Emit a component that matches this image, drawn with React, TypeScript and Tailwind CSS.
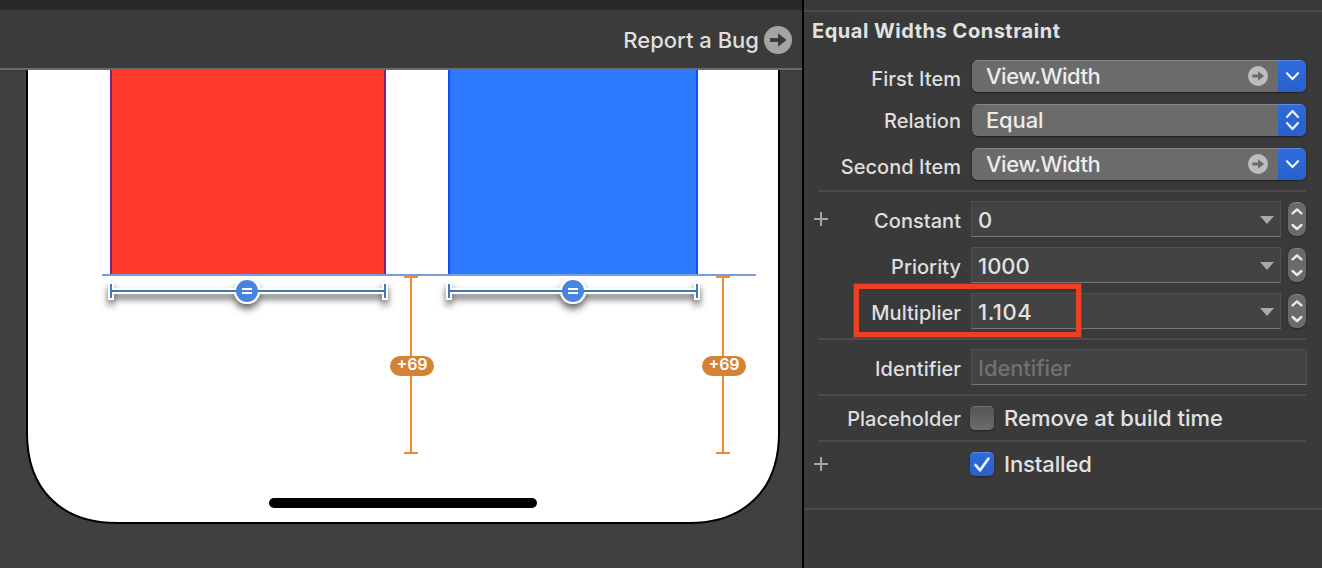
import type { ReactNode } from "react";

const FONT = "font-['Inter','Liberation_Sans',sans-serif] font-[450]";

function ArrowBadge({ size, fill, arrow }: { size: number; fill: string; arrow: string }) {
  return (
    <svg width={size} height={size} viewBox="0 0 28 28" className="shrink-0">
      <circle cx="14" cy="14" r="14" fill={fill} />
      <path d="M6 12h8V7.2L22.6 14 14 20.8V16H6z" fill={arrow} />
    </svg>
  );
}

function Chevrons({ both }: { both?: boolean }) {
  return (
    <svg width="28" height="32" viewBox="0 0 28 32" fill="none" stroke="#eef3fd" strokeWidth="2.2" strokeLinecap="round" strokeLinejoin="round" className="-mt-px">
      {both ? <path d="M9 13l5.5-6 5.5 6M9 19l5.5 6 5.5-6" /> : <path d="M9 13.2l5.5 5.8 5.5-5.8" />}
    </svg>
  );
}

function Label({ children, className = "", width = "w-[157px]" }: { children?: ReactNode; className?: string; width?: string }) {
  return (
    <div className={`${width} mr-px -ml-px shrink-0 translate-x-px text-right text-[20px] leading-6 tracking-[0.03px] whitespace-nowrap text-[#dfdfdf] ${className}`}>
      {children}
    </div>
  );
}

function Popup({ text, both }: { text: string; both?: boolean }) {
  return (
    <div className="ml-[11px] flex h-8 w-[334px] items-center overflow-hidden rounded-[6px] bg-[#6b6b6b] shadow-[0_1px_2px_rgba(0,0,0,0.45)]">
      <div className="flex h-full flex-1 items-center justify-between border-t border-[#858585] pr-2.5 pb-px pl-[14px]">
        <span className={`text-[22px] leading-7 text-[#ececec] ${both ? "tracking-[-0.15px]" : "pb-px tracking-[-0.5px]"}`}>{text}</span>
        {!both && <ArrowBadge size={20} fill="#bdbdbd" arrow="#6b6b6b" />}
      </div>
      <div className="flex h-full w-7 items-center border-t border-[#5c8ce2] bg-linear-to-b from-[#2f6bdd] to-[#2860cb]">
        <Chevrons both={both} />
      </div>
    </div>
  );
}

function Stepper() {
  return (
    <div className="ml-[7px] h-[34px] w-[18px] rounded-[8px] border-t border-[#858585] bg-[#6a6a6a] shadow-[0_1px_2px_rgba(0,0,0,0.4)]">
      <svg width="18" height="33" viewBox="0 0 18 33" fill="none" stroke="#e9e9e9" strokeWidth="2.4" strokeLinecap="round" strokeLinejoin="round">
        <path d="M4.6 10.4L9 6.4l4.4 4M4.6 22l4.4 4 4.4-4" />
      </svg>
    </div>
  );
}

const FIELD = "ml-[10px] flex h-9 items-center border border-[#505050] border-b-[#757575] bg-[#434343] pl-[6px] pr-[6px]";

function NumberRow({ label, value, spacing = "", plus }: { label: string; value: string; spacing?: string; plus?: boolean }) {
  return (
    <div className="flex h-[46px] items-center">
      {plus && <Plus />}
      <Label className="pt-[3px]" width={plus ? "w-[147px]" : "w-[157px]"}>{label}</Label>
      <div className={`${FIELD} w-[310px] justify-between`}>
        <span className={`pt-0.5 text-[22px] leading-7 text-[#e2e2e2] ${spacing}`}>{value}</span>
        <svg width="14" height="8" viewBox="0 0 14 8" className="mt-px">
          <path d="M0 0h14L7 8z" fill="#a9a9a9" />
        </svg>
      </div>
      <Stepper />
    </div>
  );
}

function Plus() {
  return (
    <svg width="14" height="14" viewBox="0 0 14 14" className="mr-[-14px] ml-[10px] shrink-0">
      <path d="M7 0v14M0 7h14" stroke="#a6a6a6" strokeWidth="2" />
    </svg>
  );
}

function Divider() {
  return <div className="mr-4 ml-[14px] h-0.5 shrink-0 bg-[#4c4c4c]" />;
}

function WidthConstraint({ x1, x2, cx }: { x1: number; x2: number; cx: number }) {
  const line = `M${x1} 214v14M${x2} 214v14M${x1} 221H${x2}`;
  const halo = `M${x1} 212v18M${x2} 212v18M${x1} 221H${x2}`;
  return (
    <g filter="url(#drop)">
      <path d={halo} stroke="#fff" strokeWidth="6" />
      <circle cx={cx} cy="221" r="13" fill="#fff" />
      <path d={line} stroke="#3f78b8" strokeWidth="2" />
      <circle cx={cx} cy="221" r="11" fill="#4786dc" />
      <path d={`M${cx - 5} 219h10M${cx - 5} 223h10`} stroke="#fff" strokeWidth="2" />
    </g>
  );
}

function BottomConstraint({ x }: { x: number }) {
  return (
    <g>
      <path d={`M${x} 207V383M${x - 7} 207h14M${x - 7} 383h14`} stroke="#ee8932" strokeWidth="2" />
      <rect x={x - 21} y="286" width="44" height="20" rx="10" fill="#d68234" />
      <text x={x + 1} y="300.3" textAnchor="middle" textLength="31" fontSize="16" fontWeight="600" fill="#fff">+69</text>
    </g>
  );
}

function Canvas() {
  return (
    <svg width="802" height="498" viewBox="0 0 802 498" fill="none" className="block bg-[#404040]">
      <defs>
        <filter id="drop" x="-10%" y="-60%" width="120%" height="260%">
          <feDropShadow dx="0" dy="5" stdDeviation="3.5" floodColor="#000" floodOpacity="0.6" />
        </filter>
      </defs>
      <path
        d="M27 -4V363C27 419.2 60.8 453 117 453H689C745.2 453 779 419.2 779 363V-4Z"
        fill="#fff"
        stroke="#000"
        strokeWidth="2"
      />
      <rect x="110" y="0" width="276" height="204" fill="#7a2580" />
      <rect x="112" y="0" width="272" height="204" fill="#ff3a2a" />
      <rect x="448" y="0" width="250" height="204" fill="#0f4dff" />
      <rect x="450" y="0" width="246" height="204" fill="#2d7aff" />
      <rect x="102" y="204" width="654" height="2" fill="#76a0dc" />
      <WidthConstraint x1={111} x2={385} cx={247} />
      <WidthConstraint x1={449} x2={697} cx={573} />
      <BottomConstraint x={411} />
      <BottomConstraint x={723} />
      <rect x="269" y="428" width="268" height="10" rx="5" fill="#000" />
    </svg>
  );
}

export default function App() {
  return (
    <div className={`flex h-[568px] w-[1322px] overflow-hidden bg-black ${FONT}`}>
      <main className="flex w-[802px] flex-col">
        <div className="h-2.5 bg-[#282828]" />
        <div className="flex h-[60px] items-center justify-end gap-[5px] border-b-2 border-[#6a6a6a] bg-[#3b3b3b] pt-0.5 pr-2.5">
          <span className="text-[22px] leading-7 text-[#dfdfdf]">Report a Bug</span>
          <ArrowBadge size={28} fill="#a4a4a4" arrow="#3b3b3b" />
        </div>
        <Canvas />
      </main>

      <aside className="relative ml-0.5 flex w-[518px] flex-col bg-[#3a3a3a]">
        <div className="mt-2.5 h-0.5 shrink-0 bg-[#4c4c4c]" />
        <h2 className="h-[42px] shrink-0 pt-[7px] pl-2 text-[20px] leading-6 font-bold tracking-[0.52px] text-[#e2e2e2]">Equal Widths Constraint</h2>

        <div className="flex h-11 items-center">
          <Label className="pt-[5px]">First Item</Label>
          <Popup text="View.Width" />
        </div>
        <div className="flex h-11 items-center">
          <Label className="pt-px">Relation</Label>
          <Popup text="Equal" both />
        </div>
        <div className="mb-1 flex h-11 items-center">
          <Label className="pt-[5px]">Second Item</Label>
          <Popup text="View.Width" />
        </div>

        <Divider />
        <div className="py-1">
          <NumberRow label="Constant" value="0" plus />
          <NumberRow label="Priority" value="1000" />
          <NumberRow label="Multiplier" value="1.104" spacing="tracking-[0.5px]" />
        </div>

        <Divider />
        <div className="flex h-[54px] items-center">
          <Label className="pt-[3px]">Identifier</Label>
          <div className={`${FIELD} w-[336px]`}>
            <span className="pt-0.5 text-[22px] leading-7 tracking-[-0.1px] text-[#717171]">Identifier</span>
          </div>
        </div>

        <Divider />
        <div className="flex h-11 items-center">
          <Label className="pt-px">Placeholder</Label>
          <div className="ml-[9px] size-6 rounded-[5px] border-t border-[#737373] bg-linear-to-b from-[#565656] to-[#6c6c6c] shadow-[0_1px_2px_rgba(0,0,0,0.4)]" />
          <span className="ml-[10px] text-[22px] leading-7 text-[#e2e2e2]">Remove at build time</span>
        </div>

        <Divider />
        <div className="flex h-11 items-center">
          <Plus />
          <div className="ml-[156px] flex size-6 items-center justify-center rounded-[5px] border-t border-[#5c8ce2] bg-linear-to-b from-[#2f6bdd] to-[#2860cb] shadow-[0_1px_2px_rgba(0,0,0,0.4)]">
            <svg width="24" height="23" viewBox="0 0 24 23" fill="none">
              <path d="M5.5 12l4.6 5.3L18.5 5.6" stroke="#f0f5ff" strokeWidth="2.6" strokeLinecap="round" strokeLinejoin="round" />
            </svg>
          </div>
          <span className="ml-[10px] text-[22px] leading-7 tracking-[-0.1px] text-[#e2e2e2]">Installed</span>
        </div>

        <div className="mt-[22px] h-0.5 shrink-0 bg-[#4c4c4c]" />

        <div className="absolute top-[284px] left-[50px] h-[53px] w-[227px] border-5 border-[#ec4025] shadow-[0_0_0_1px_rgba(236,64,37,0.35)]" />
      </aside>
    </div>
  );
}
